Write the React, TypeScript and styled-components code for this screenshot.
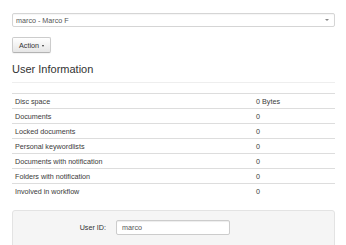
import React from 'react'
import styled, { createGlobalStyle } from 'styled-components'

const GlobalStyle = createGlobalStyle`
  html, body {
    margin: 0;
    padding: 0;
    background: #fff;
  }
  body {
    font-family: 'Liberation Sans', Arial, sans-serif;
    font-size: 7.2px;
    color: #3a3a3a;
  }
`

const Page = styled.div`
  padding: 13px 11px 0 12px;
`

const SelectBox = styled.div`
  box-sizing: border-box;
  height: 14px;
  display: flex;
  align-items: center;
  justify-content: space-between;
  padding: 0 5px 0 3px;
  border: 1px solid #d5d5d5;
  border-radius: 2px;
  background: #fff;
  color: #555;
  font-size: 7.2px;
  box-shadow: inset 0 1px 1px rgba(0, 0, 0, 0.04);
`

const Arrow = styled.span`
  width: 0;
  height: 0;
  border-left: 2px solid transparent;
  border-right: 2px solid transparent;
  border-top: 2.5px solid #888;
`

const ActionButton = styled.button`
  box-sizing: border-box;
  margin-top: 10px;
  height: 16px;
  width: 39px;
  display: flex;
  align-items: center;
  justify-content: center;
  gap: 3px;
  padding: 0;
  font-family: inherit;
  font-size: 7.2px;
  color: #333;
  background: linear-gradient(#fff, #e6e6e6);
  border: 1px solid #ccc;
  border-bottom-color: #b3b3b3;
  border-radius: 2px;
  box-shadow: inset 0 1px 0 rgba(255, 255, 255, 0.2), 0 1px 1px rgba(0, 0, 0, 0.05);
`

const Caret = styled.span`
  width: 0;
  height: 0;
  border-left: 1.5px solid transparent;
  border-right: 1.5px solid transparent;
  border-top: 2px solid #333;
  margin-top: 1px;
`

const Heading = styled.h3`
  margin: 9px 0 0;
  padding-bottom: 6px;
  font-size: 11px;
  font-weight: 400;
  line-height: 14px;
  color: #333;
  border-bottom: 1px solid #eee;
`

const InfoTable = styled.table`
  width: 100%;
  margin-top: 10px;
  border-collapse: collapse;
  font-size: 7.2px;
`

const Cell = styled.td<{ $value?: boolean }>`
  box-sizing: border-box;
  height: 15px;
  padding: 0 3px;
  border-top: 1px solid #ddd;
  vertical-align: middle;
  width: ${({ $value }) => ($value ? 'auto' : '241px')};
`

const Panel = styled.div`
  margin-top: 11px;
  padding: 9px 0 30px;
  background: #f5f5f5;
  border: 1px solid #e3e3e3;
  border-radius: 3px;
`

const FieldRow = styled.div`
  display: flex;
  align-items: center;
`

const Label = styled.label`
  width: 93px;
  text-align: right;
  font-size: 7.2px;
  color: #333;
`

const TextInput = styled.div`
  box-sizing: border-box;
  margin-left: 10px;
  width: 114px;
  height: 15px;
  display: flex;
  align-items: center;
  padding: 0 5px;
  background: #fff;
  border: 1px solid #ccc;
  border-radius: 2px;
  color: #555;
  font-size: 7.2px;
  box-shadow: inset 0 1px 1px rgba(0, 0, 0, 0.075);
`

const rows: [string, string][] = [
  ['Disc space', '0 Bytes'],
  ['Documents', '0'],
  ['Locked documents', '0'],
  ['Personal keywordlists', '0'],
  ['Documents with notification', '0'],
  ['Folders with notification', '0'],
  ['Involved in workflow', '0'],
]

const App: React.FC = () => {
  return (
    <>
      <GlobalStyle />
      <Page>
        <SelectBox>
          <span>marco - Marco F</span>
          <Arrow />
        </SelectBox>
        <ActionButton>
          Action <Caret />
        </ActionButton>
        <Heading>User Information</Heading>
        <InfoTable>
          <tbody>
            {rows.map(([name, value]) => (
              <tr key={name}>
                <Cell>{name}</Cell>
                <Cell $value>{value}</Cell>
              </tr>
            ))}
          </tbody>
        </InfoTable>
        <Panel>
          <FieldRow>
            <Label>User ID:</Label>
            <TextInput>marco</TextInput>
          </FieldRow>
        </Panel>
      </Page>
    </>
  )
}

export default App
